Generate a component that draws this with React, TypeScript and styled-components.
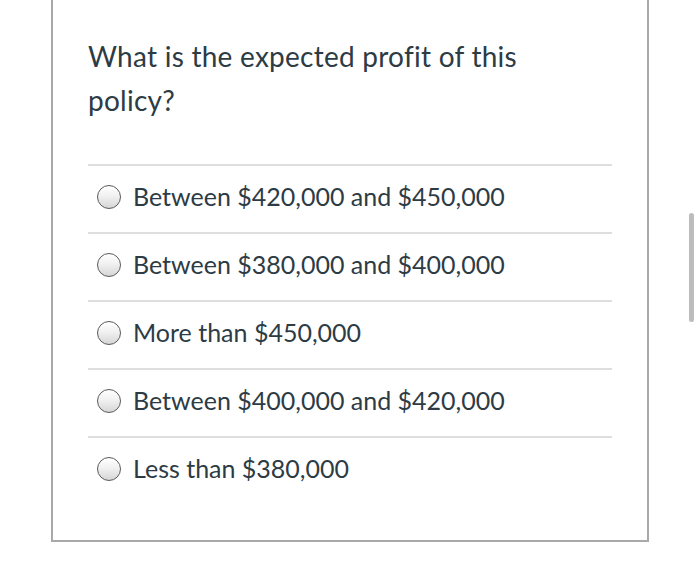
import { FC } from 'react'
import styled, { createGlobalStyle } from 'styled-components'

const GlobalStyle = createGlobalStyle`
  html, body {
    margin: 0;
    padding: 0;
    background: #ffffff;
  }
  body {
    width: 700px;
    height: 569px;
    overflow: hidden;
    position: relative;
    font-family: Lato, 'Liberation Sans', sans-serif;
    color: #2d3b45;
  }
`

const Card = styled.section`
  box-sizing: border-box;
  margin-left: 51px;
  width: 598px;
  border: 2px solid #a9a9a9;
  border-top: none;
  padding: 34px 35px 36px;
`

const Question = styled.h2`
  margin: 0 0 42px;
  font-size: 28px;
  font-weight: 400;
  line-height: 44px;
  letter-spacing: 0.25px;
`

const Answers = styled.ul`
  list-style: none;
  margin: 0;
  padding: 0;
`

const Answer = styled.li`
  display: flex;
  align-items: flex-start;
  gap: 12px;
  border-top: 2px solid #dedede;
  padding: 16px 0 22px 9px;
`

const Radio = styled.span`
  box-sizing: border-box;
  flex: none;
  width: 24px;
  height: 24px;
  margin-top: 3px;
  border-radius: 50%;
  border: 1.5px solid #5a5a5a;
  background: linear-gradient(180deg, #ffffff 0%, #f1f1f1 45%, #d6d6d6 100%);
`

const Label = styled.span`
  font-size: 25px;
  line-height: 28px;
`

const Scrollbar = styled.div`
  position: absolute;
  left: 689px;
  top: 213px;
  width: 5px;
  height: 109px;
  border-radius: 3px;
  background: #bcbcbc;
`

const OPTIONS = [
  'Between $420,000 and $450,000',
  'Between $380,000 and $400,000',
  'More than $450,000',
  'Between $400,000 and $420,000',
  'Less than $380,000',
]

const App: FC = () => (
  <>
    <GlobalStyle />
    <Card>
      <Question>
        What is the expected profit of this
        <br />
        policy?
      </Question>
      <Answers>
        {OPTIONS.map((option) => (
          <Answer key={option}>
            <Radio />
            <Label>{option}</Label>
          </Answer>
        ))}
      </Answers>
    </Card>
    <Scrollbar />
  </>
)

export default App
